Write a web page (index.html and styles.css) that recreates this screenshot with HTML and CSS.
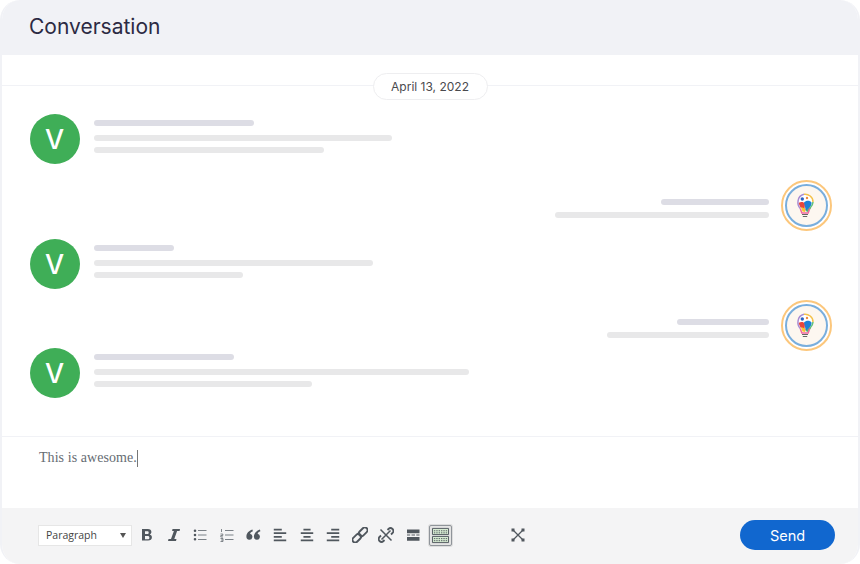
FILE: index.html
```html
<!DOCTYPE html>
<html lang="en">
<head>
<meta charset="utf-8">
<title>Conversation</title>
<link rel="stylesheet" href="styles.css">
</head>
<body>
<main class="card">
  <header class="head"><h1 class="title">Conversation</h1></header>
  <div class="date-row"><span class="date">April 13, 2022</span></div>
  <section class="list">
    <div class="msg">
      <div class="avatar">V</div>
      <div class="lines">
        <span class="bar dark w160"></span>
        <span class="bar w298 second"></span>
        <span class="bar w230"></span>
      </div>
    </div>
    <div class="msg mine gap-2">
      <div class="lines end">
        <span class="bar dark w108"></span>
        <span class="bar w214"></span>
      </div>
      <div class="ring"><svg class="bulb" viewBox="0 0 18 26"><use href="#bulb"/></svg></div>
    </div>
    <div class="msg gap-3">
      <div class="avatar">V</div>
      <div class="lines">
        <span class="bar dark w80"></span>
        <span class="bar w279 second"></span>
        <span class="bar w149"></span>
      </div>
    </div>
    <div class="msg mine gap-4">
      <div class="lines end">
        <span class="bar dark w92"></span>
        <span class="bar w162"></span>
      </div>
      <div class="ring"><svg class="bulb" viewBox="0 0 18 26"><use href="#bulb"/></svg></div>
    </div>
    <div class="msg gap-5">
      <div class="avatar">V</div>
      <div class="lines">
        <span class="bar dark w140"></span>
        <span class="bar w375 second"></span>
        <span class="bar w218"></span>
      </div>
    </div>
  </section>
  <div class="editor"><span class="typed">This is awesome.</span><span class="caret"></span></div>
  <footer class="toolbar">
    <div class="select"><span>Paragraph</span><i class="arrow"></i></div>
    <div class="tools">
      <svg class="ic" viewBox="0 0 16 16"><path fill="#50575e" fill-rule="evenodd" d="M3 2h5.900c2.200 0 3.500 1.100 3.500 3 0 1.100-.6 2-1.600 2.400 1.300.4 2.100 1.400 2.100 2.800 0 2.200-1.500 3.300-3.800 3.300H3zM6 4.300V7h2.300c1 0 1.400-.5 1.400-1.350S9.300 4.300 8.300 4.300zM6 9.100v3.100h2.700c1.100 0 1.700-.6 1.700-1.550S9.800 9.100 8.700 9.100z"/></svg>
      <svg class="ic" viewBox="0 0 16 16"><path fill="#50575e" d="M6.500 2h7.500l-.4 1.900h-2.500L8.300 12.100h2.200l-.5 1.900H2l.5-1.900h2.500L7.900 3.900H6.100z"/></svg>
      <svg class="ic" viewBox="0 0 16 16"><path fill="#50575e" d="M3 2.500a1.300 1.300 0 1 1 0 2.600 1.300 1.300 0 0 1 0-2.600zm0 4.200a1.300 1.300 0 1 1 0 2.600 1.300 1.300 0 0 1 0-2.600zm0 4.200a1.300 1.300 0 1 1 0 2.600 1.300 1.300 0 0 1 0-2.600z"/><path stroke="#7b8187" stroke-width="1" d="M6 3.500h8.500M6 8h8.500M6 12.500h8.500"/></svg>
      <svg class="ic" viewBox="0 0 16 16"><path stroke="#7b8187" fill="none" d="M6 3.500h8.500M6 8h8.500M6 12.500h8.500"/><path stroke="#666c72" fill="none" stroke-width=".8" d="M2.500 2v3M1.500 7h2.300v1.500H1.800V10h2.200M1.500 11.500h2.500v3H1.500M2 13h2"/></svg>
      <svg class="ic" viewBox="0 0 16 16"><path fill="#50575e" d="M7.400 2.600l.5 1.700c-1.600.6-2.500 1.400-2.800 2.500a3 3 0 1 1-3.700 2.900c0-3.200 2.300-5.800 6-7.100zm7.500 0l.5 1.700c-1.600.6-2.500 1.400-2.800 2.500a3 3 0 1 1-3.700 2.900c0-3.200 2.300-5.800 6-7.100z"/></svg>
      <svg class="ic" viewBox="1 1 18 18"><path fill="#50575e" d="M12 5V3H3v2h9zm5 4V7H3v2h14zm-5 4v-2H3v2h9zm5 4v-2H3v2h14z"/></svg>
      <svg class="ic" viewBox="1 1 18 18"><path fill="#50575e" d="M14 5V3H6v2h8zm3 4V7H3v2h14zm-3 4v-2H6v2h8zm3 4v-2H3v2h14z"/></svg>
      <svg class="ic" viewBox="1 1 18 18"><path fill="#50575e" d="M17 5V3H8v2h9zm0 4V7H3v2h14zm0 4v-2H8v2h9zm0 4v-2H3v2h14z"/></svg>
      <svg class="ic" viewBox="0 0 16 16"><g fill="none" stroke="#50575e" stroke-width="1.900" transform="rotate(-45 8 8)"><rect x="-1.500" y="5.300" width="10" height="5.400" rx="2.700"/><rect x="7.500" y="5.300" width="10" height="5.400" rx="2.700"/></g></svg>
      <svg class="ic" viewBox="0 0 16 16"><g fill="none" stroke="#50575e" stroke-width="1.800"><path d="M9.500 3l1-1a2.800 2.800 0 0 1 4 4l-1.500 1.500"/><path d="M6.500 13l-1 1a2.800 2.800 0 0 1-4-4L3 8.500"/></g><path stroke="#50575e" stroke-width="1.500" d="M2.500 2.500l11 11M12.500 3.500l-9 9"/></svg>
      <svg class="ic" viewBox="0 0 16 16"><path fill="#50575e" d="M2 2.500h12.500v3.700H2zM2 10h12.500v3.700H2zM2 7.600h3.200v1H2zM6.500 7.600h3.500v1H6.500zM11.300 7.600h3.200v1h-3.200z"/></svg>
      <span class="kbd"><svg class="kbd-ic" viewBox="0 0 20 18"><path fill="#d7ecd2" stroke="#50575e" d="M1.500 1.500h17v6.500h-17zM1.500 10h17v6.500h-17z"/><path stroke="#50575e" stroke-dasharray="1.500 1" d="M3 4h14M3 6.200h14M3 12.300h14M3 14.500h14"/></svg></span>
    </div>
    <svg class="ic full" viewBox="0 0 16 16"><path stroke="#50575e" stroke-width="1.300" d="M3 3l10 10M13 3L3 13"/><path fill="#50575e" d="M1.500 1.500h3v3h-3zM11.500 1.500h3v3h-3zM1.500 11.500h3v3h-3zM11.500 11.500h3v3h-3z"/></svg>
    <button class="send" type="button">Send</button>
  </footer>
</main>
<svg class="defs" width="0" height="0" aria-hidden="true">
  <symbol id="bulb" viewBox="0 0 18 26">
    <circle cx="9" cy="9" r="7.800" fill="#fff"/>
    <path fill="#e8463c" d="M2.500 10c2-1.500 5-1.500 6.500.5l-.5 6.500-4-2.500z"/>
    <path fill="#f7c531" d="M5 14l5 2-1 3-2.500-.5z"/>
    <path fill="#1f7fd6" d="M8 9.500c2-2.500 6-2.500 7.500 0 .5 2.500-2 6-5.500 9z"/>
    <path fill="#4db86a" d="M10 18l4-4 .8 1.500-3 3.500z"/>
    <circle cx="6.300" cy="6" r="1.700" fill="#2a62c4"/>
    <circle cx="11" cy="5" r="1.200" fill="#f08a3c"/>
    <path fill="none" stroke="#a98bd2" stroke-width="1.500" d="M4.300 15.500C.5 11.500 1 3 8 1.300"/>
    <path fill="none" stroke="#f4c24a" stroke-width="1.500" d="M8 1.300c4.500-.5 9 2.500 9 7.700"/>
    <path fill="none" stroke="#5fc07a" stroke-width="1.500" d="M17 9c0 3-2 5-3.300 6.500"/>
    <path fill="none" stroke="#ef6aa0" stroke-width="1.500" d="M4.300 15.500l1.500 4.500h6.400l1.500-4.500"/>
    <path fill="none" stroke="#666" stroke-width="1.200" d="M6 21.500h6M6.800 23.500h4.400"/>
  </symbol>
</svg>
</body>
</html>
```
FILE: styles.css
```css
* { box-sizing: border-box; }
html, body { margin: 0; padding: 0; background: #fff; }
.card {
  width: 860px; height: 564px;
  border: 2px solid #f1f2f6; border-top: 0; border-bottom: 0;
  border-radius: 20px; overflow: hidden;
  display: flex; flex-direction: column;
  font-family: "Inter", "Liberation Sans", sans-serif;
}
.head { height: 55px; background: #f1f2f6; flex: none; display: flex; align-items: center; padding: 0 0 2px 29px; margin: 0 -2px; }
.title { margin: 0; font-family: "Inter", sans-serif; font-size: 21px; font-weight: 400; color: #2c2a43; }
.date-row { height: 45px; flex: none; display: flex; justify-content: center; align-items: flex-end; position: relative; }
.date-row::before { content: ""; position: absolute; left: 0; right: 0; top: 30px; height: 1px; background: #f1f2f6; }
.date { position: relative; width: 115px; height: 27px; background: #fff; border: 1px solid #eeeef0; border-radius: 14px; font-size: 12px; color: #4a4a4e; display: flex; align-items: center; justify-content: center; }
.list { flex: 1; display: flex; flex-direction: column; padding: 14px 26px 0 28px; }
.msg { display: flex; align-items: flex-start; flex: none; }
.mine { justify-content: flex-end; gap: 12px; }
.gap-2 { margin-top: 16px; }
.gap-3 { margin-top: 8px; }
.gap-4 { margin-top: 11px; }
.gap-5 { margin-top: -3px; }
.avatar { width: 50px; height: 50px; border-radius: 50%; background: #3fae57; color: #fff; font-size: 27px; font-weight: 500; padding-right: 1px; display: flex; align-items: center; justify-content: center; flex: none; }
.lines { display: flex; flex-direction: column; gap: 6px; margin-left: 14px; padding-top: 6px; }
.end { align-items: flex-end; margin: 0; padding-top: 19px; gap: 7px; }
.bar { display: block; height: 6px; border-radius: 3px; background: #e8e8e9; }
.bar.dark { background: #dddde5; }
.bar.second { margin-top: 3px; }
.w80 { width: 80px; } .w92 { width: 92px; } .w108 { width: 108px; } .w140 { width: 140px; } .w149 { width: 149px; } .w160 { width: 160px; } .w162 { width: 162px; } .w214 { width: 214px; } .w218 { width: 218px; } .w230 { width: 230px; } .w279 { width: 279px; } .w298 { width: 298px; } .w375 { width: 375px; }
.ring { width: 51px; height: 51px; border-radius: 50%; border: 2px solid #fcc77c; flex: none; position: relative; background: #fff; padding: 11px 0 0 13px; }
.ring::before { content: ""; position: absolute; inset: 2px; border-radius: 50%; border: 2px solid #79aedd; background: #fdf7f0; }
.bulb { position: relative; display: block; width: 18px; height: 26px; }
.editor { height: 72px; flex: none; border-top: 1px solid #f1f2f6; padding: 11px 0 0 37px; font-family: "Liberation Serif", Georgia, serif; font-size: 14px; letter-spacing: .06px; line-height: 19px; color: #666c73; display: flex; align-items: flex-start; }
.caret { width: 1px; height: 17px; background: #777; margin-top: 2px; }
.toolbar { height: 56px; flex: none; background: #f4f4f5; margin: 0 -2px; padding: 0 25px 2px 38px; display: flex; align-items: center; }
.select { width: 94px; height: 21px; background: #fff; border: 1px solid #e6e6e6; font-family: "Open Sans", sans-serif; font-size: 10.500px; color: #444; display: flex; align-items: center; justify-content: space-between; padding: 0 3px 0 7px; }
.arrow { width: 0; height: 0; border-left: 3.500px solid transparent; border-right: 3.500px solid transparent; border-top: 5px solid #555; margin-right: 2px; }
.tools { display: flex; align-items: center; gap: 10.600px; margin-left: 7px; }
.ic { width: 16px; height: 16px; display: block; flex: none; }
.kbd { width: 23px; height: 21px; border: 1px solid #8f949a; border-radius: 2px; background: #e4e4e4; box-shadow: 0 0 0 1px #ddd; display: flex; align-items: center; justify-content: center; margin-left: -3px; flex: none; }
.kbd-ic { width: 19px; height: 17px; display: block; }
.full { margin-left: 58px; }
.send { margin-left: auto; width: 95px; height: 30px; border: 0; border-radius: 15px; background: #1167cf; color: #fff; font-family: "Inter", sans-serif; font-size: 14.500px; font-weight: 400; }
.defs { position: absolute; }
```
